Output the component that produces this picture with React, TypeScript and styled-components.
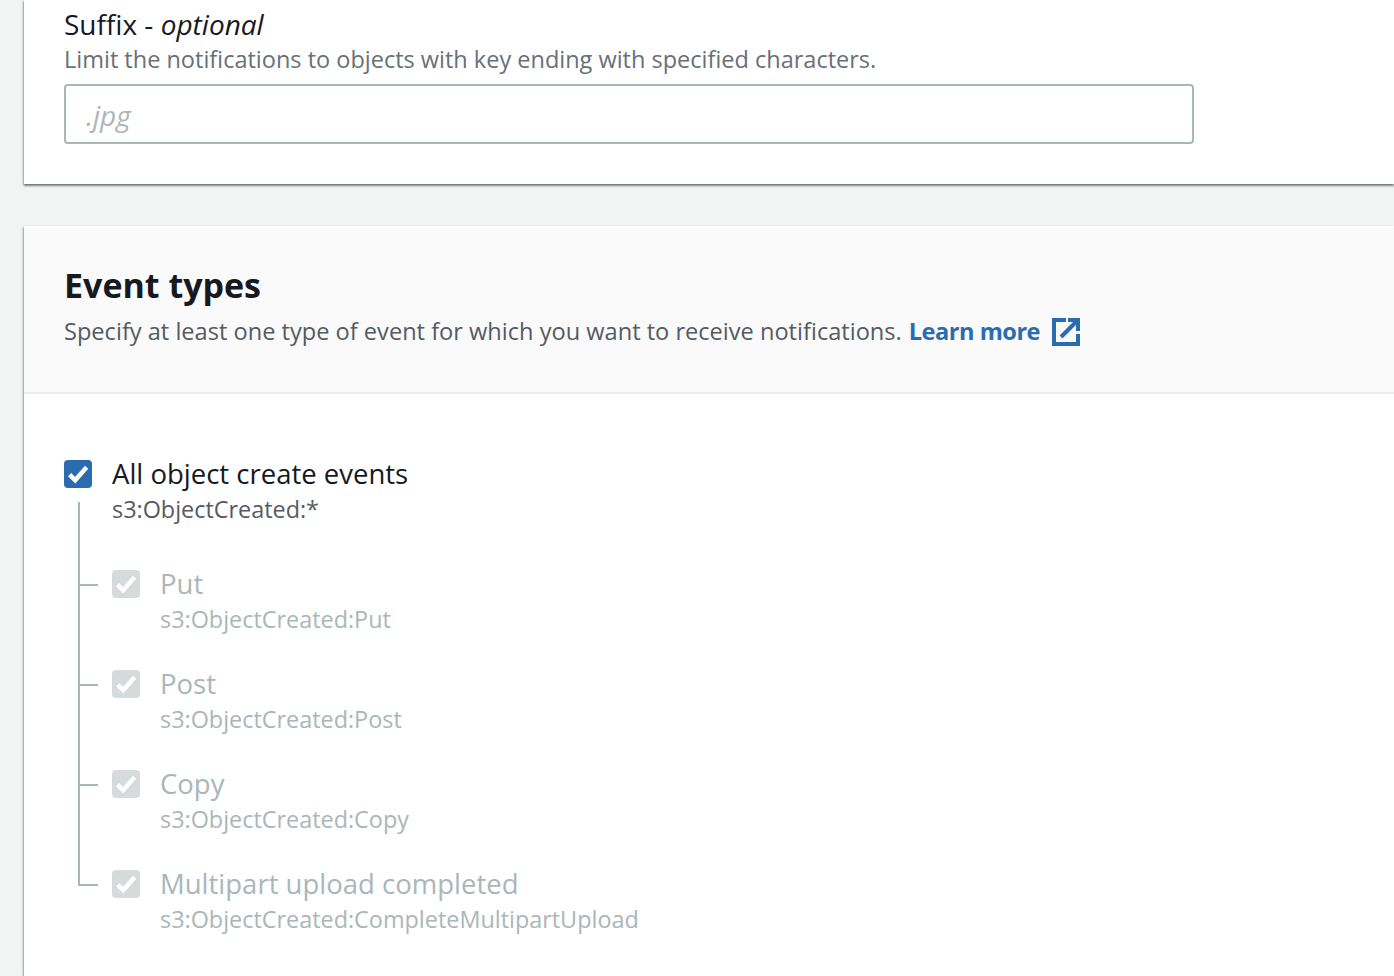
import styled, { createGlobalStyle } from 'styled-components'

const GlobalStyle = createGlobalStyle`
  html, body {
    margin: 0;
    padding: 0;
    height: 976px;
    overflow: hidden;
    background: #f2f3f3;
    font-family: "Open Sans", "Liberation Sans", sans-serif;
    -webkit-font-smoothing: antialiased;
  }
`

const Page = styled.div`
  display: flex;
  flex-direction: column;
  gap: 42px;
  padding-left: 24px;
`

const Card = styled.section`
  background: #fff;
  box-shadow: 0 2px 2px 0 rgba(0, 28, 36, 0.45), -1px 1px 2px 0 rgba(0, 28, 36, 0.25);
`

const SuffixBody = styled.div`
  padding: 6px 200px 40px 40px;
`

const FieldLabel = styled.div`
  font-size: 28px;
  line-height: 36px;
  color: #16191f;
`

const FieldHint = styled.div`
  font-size: 23.5px;
  line-height: 34px;
  color: #687078;
  margin-bottom: 8px;
`

const TextInput = styled.input`
  display: block;
  box-sizing: border-box;
  width: 100%;
  height: 60px;
  padding: 2px 20px 0;
  border: 2px solid #aab7b8;
  border-radius: 4px;
  font-family: inherit;
  font-size: 28px;
  background: #fff;

  &::placeholder {
    color: #aab7b8;
    font-style: italic;
    opacity: 1;
  }
`

const CardHeader = styled.header`
  background: #fafafa;
  border-bottom: 2px solid #eaeded;
  padding: 36px 40px 40px;
`

const Heading = styled.h2`
  margin: 0 0 2px;
  font-size: 34px;
  line-height: 46px;
  font-weight: 700;
  color: #16191f;
`

const HeaderHint = styled.p`
  display: flex;
  align-items: center;
  margin: 0;
  font-size: 23.6px;
  line-height: 42px;
  color: #545b64;
`

const LearnMore = styled.a`
  margin-left: 7px;
  font-weight: 700;
  letter-spacing: -0.5px;
  color: #2b6cb0;
  text-decoration: none;
`

const ExternalIcon = styled.svg`
  width: 28px;
  height: 28px;
  margin: 1px 0 0 12px;
  color: #2b6cb0;
`

const CardBody = styled.div`
  padding: 65px 40px 7px;
`

const Row = styled.div`
  display: flex;
  gap: 20px;
`

const Box = styled.span<{ $disabled?: boolean }>`
  flex: none;
  display: flex;
  width: 28px;
  height: 28px;
  margin-top: 1px;
  border-radius: 4px;
  background: ${p => (p.$disabled ? '#d5dbdb' : '#2b6cb0')};
`

const Texts = styled.div`
  display: flex;
  flex-direction: column;
`

const Label = styled.span<{ $disabled?: boolean }>`
  font-size: 27.5px;
  line-height: 30px;
  color: ${p => (p.$disabled ? '#aab7b8' : '#16191f')};
`

const Description = styled.span<{ $disabled?: boolean }>`
  font-size: 23.4px;
  line-height: 40px;
  color: ${p => (p.$disabled ? '#aab7b8' : '#545b64')};
`

const Tree = styled.ul`
  list-style: none;
  margin: 40px 0 0;
  padding: 0 0 0 48px;
`

const TreeItem = styled.li<{ $last?: boolean }>`
  position: relative;
  height: 100px;

  &::before {
    content: '';
    position: absolute;
    left: -34px;
    top: -1px;
    height: ${p => (p.$last ? '18px' : '101px')};
    border-left: 2px solid #aab7b8;
  }

  &:first-child::before {
    top: -67px;
    height: 167px;
  }

  &::after {
    content: '';
    position: absolute;
    left: -34px;
    top: 15px;
    width: 20px;
    border-top: 2px solid #aab7b8;
  }
`

const Check = () => (
  <svg width="28" height="28" viewBox="0 0 28 28" fill="none" stroke="#fff" strokeWidth="4.4">
    <path d="M5.6 14.6l5.6 5.6L22.6 7.2" />
  </svg>
)

const events = [
  { label: 'Put', code: 's3:ObjectCreated:Put' },
  { label: 'Post', code: 's3:ObjectCreated:Post' },
  { label: 'Copy', code: 's3:ObjectCreated:Copy' },
  { label: 'Multipart upload completed', code: 's3:ObjectCreated:CompleteMultipartUpload' },
]

const App = () => {
  return <Page>
    <GlobalStyle />
    <Card>
      <SuffixBody>
        <FieldLabel>Suffix - <i>optional</i></FieldLabel>
        <FieldHint>Limit the notifications to objects with key ending with specified characters.</FieldHint>
        <TextInput placeholder=".jpg" />
      </SuffixBody>
    </Card>
    <Card>
      <CardHeader>
        <Heading>Event types</Heading>
        <HeaderHint>
          Specify at least one type of event for which you want to receive notifications.
          <LearnMore href="#">Learn more</LearnMore>
          <ExternalIcon viewBox="0 0 28 28" fill="none" stroke="currentColor" strokeWidth="4">
            <path d="M14 2H2v24h24V16" />
            <path d="M16 2h10v11" />
            <path d="M25 3L9 19" />
          </ExternalIcon>
        </HeaderHint>
      </CardHeader>
      <CardBody>
        <Row>
          <Box><Check /></Box>
          <Texts>
            <Label>All object create events</Label>
            <Description>s3:ObjectCreated:*</Description>
          </Texts>
        </Row>
        <Tree>
          {events.map((e, i) => <TreeItem key={e.code} $last={i === events.length - 1}>
            <Row>
              <Box $disabled><Check /></Box>
              <Texts>
                <Label $disabled>{e.label}</Label>
                <Description $disabled>{e.code}</Description>
              </Texts>
            </Row>
          </TreeItem>)}
        </Tree>
      </CardBody>
    </Card>
  </Page>
}

export default App
